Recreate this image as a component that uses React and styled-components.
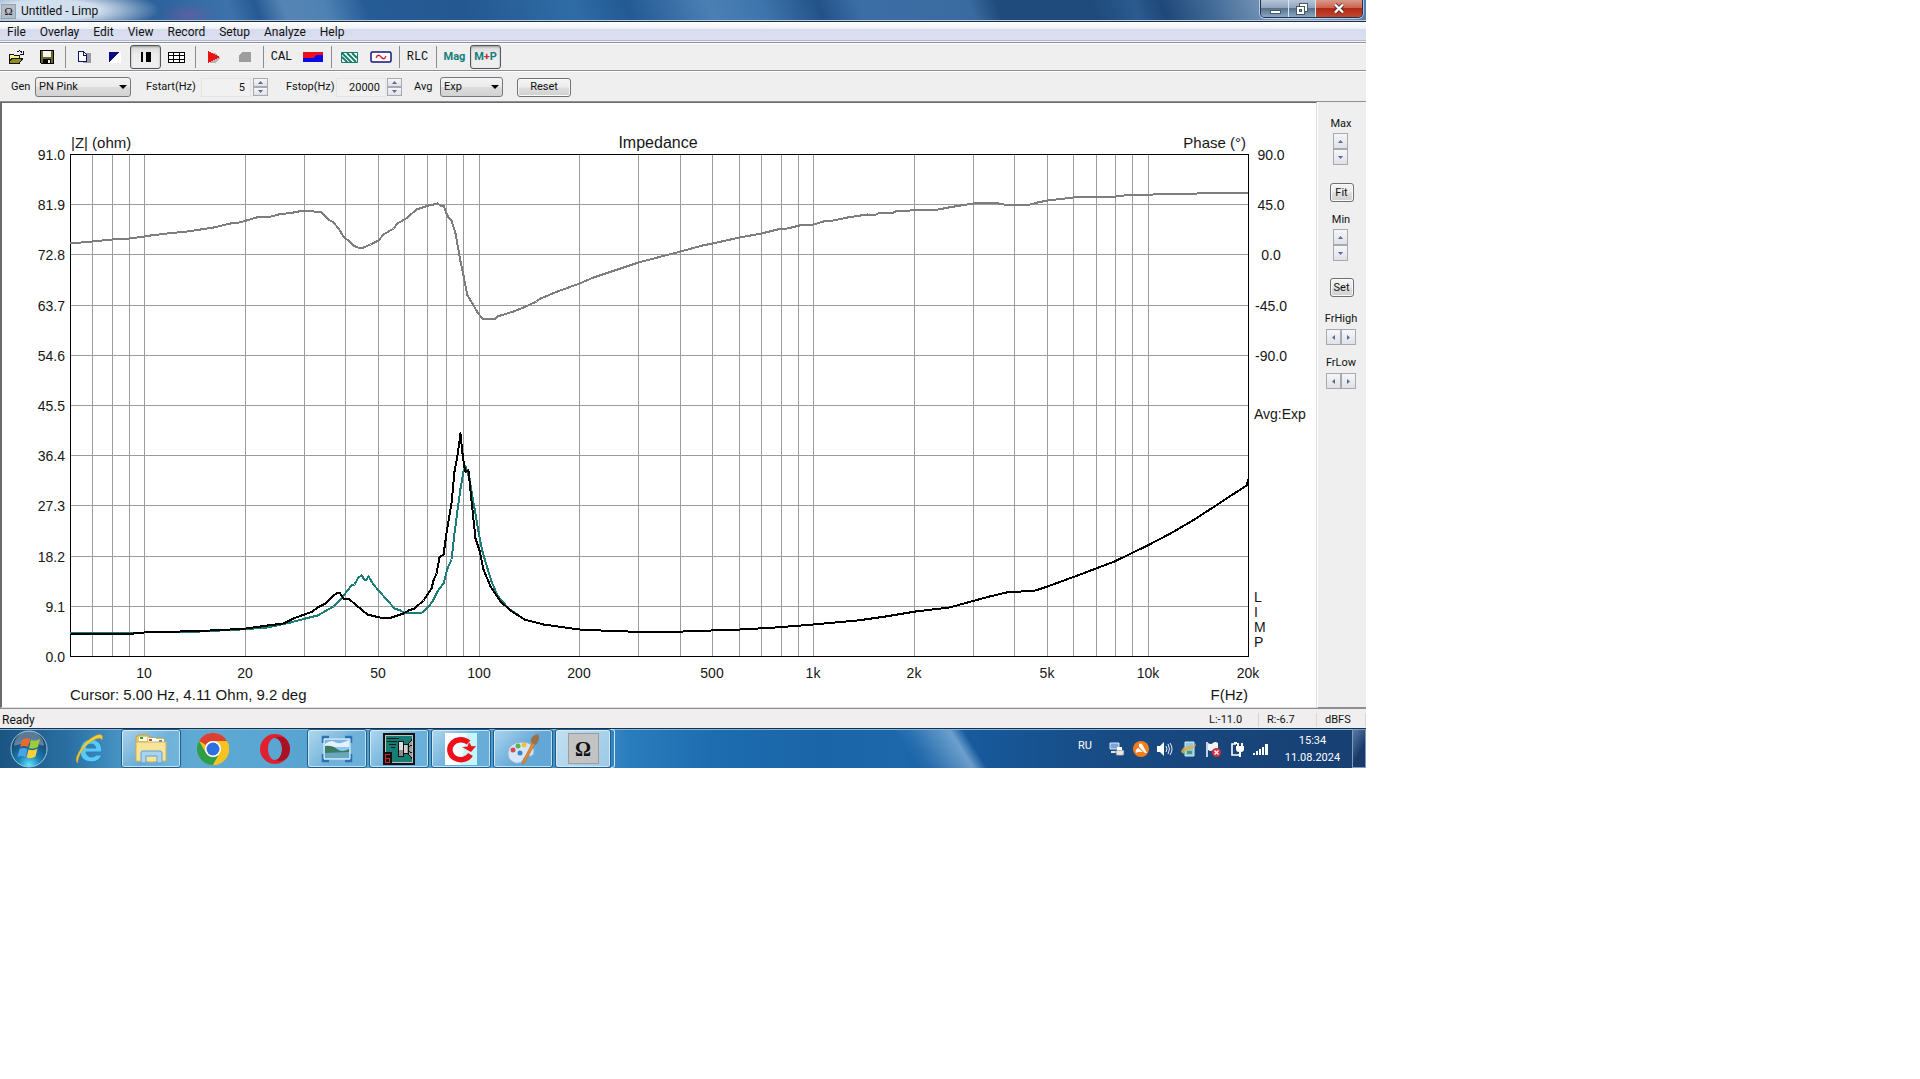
import React from "react";
import styled, { createGlobalStyle, css } from "styled-components";

const GlobalStyle = createGlobalStyle`
  *, *::before, *::after { box-sizing: border-box; }
  body { margin: 0; background: #fff; }
  button, input, select { font: inherit; color: inherit; margin: 0; padding: 0; }
`;

const UI = `Roboto, "Open Sans", sans-serif`;

const Page = styled.div`
  display: grid;
  grid-template-columns: minmax(0, 1366fr) minmax(0, 554fr);
  font-family: ${UI};
  font-size: 11px;
  line-height: 14px;
  color: #111;
`;

const Desktop = styled.main`
  display: flex;
  flex-direction: column;
  overflow: hidden;
`;

/* ---------- title bar ---------- */

const TitleBar = styled.header`
  display: flex;
  align-items: flex-start;
  justify-content: space-between;
  height: 22px;
  border-bottom: 1px solid #1b2c47;
  box-shadow: inset 0 -1px 0 #b9cbe0;
  background:
    radial-gradient(ellipse 110px 22px at 50px 10px, rgba(225, 235, 246, 0.9) 45%, rgba(225, 235, 246, 0) 100%),
    radial-gradient(ellipse 28px 12px at 188px 15px, rgba(130, 90, 160, 0.5), rgba(130, 90, 160, 0) 100%),
    linear-gradient(70deg, #5d83b0 0, #3a6699 7%, #2d629c 12%, #3d72ab 17%, #275a93 19%,
      #5585b5 21%, #4f82b4 24%, #265c96 27%, #245890 34%, #2f6ca6 42%, #235a93 46%, #4a80b4 52%,
      #3d74ab 56%, #235288 60%, #3c6ea6 63%, #3a6ba0 71%, #1f4a7c 73%, #1f4a7c 80%, #2b5b90 83%,
      #1e4878 85%, #486f9b 89%, #8aa5c2 94%, #4f7ba8 100%);
`;

const Caption = styled.div`
  display: flex;
  align-items: center;
  gap: 5px;
  padding: 4px 0 0 1px;
`;

const AppIcon = styled.span`
  width: 15px;
  height: 15px;
  background: #b4bcc6;
  border: 1px solid #98a2ae;
  font: 11px/13px "Liberation Serif", serif;
  text-align: center;
`;

const CaptionText = styled.h1`
  margin: 0;
  font-size: 12px;
  line-height: 15px;
  font-weight: 400;
`;

const WindowButtons = styled.div`
  display: flex;
  height: 18px;
  margin-right: 3px;
  border: 1px solid #1f3350;
  border-top: 0;
  border-radius: 0 0 5px 5px;
  box-shadow: 0 0 0 1px rgba(220, 232, 245, 0.7);
  overflow: hidden;
`;

const WindowButton = styled.button`
  display: grid;
  place-items: center;
  width: ${(p) => (p.$close ? 47 : 27)}px;
  border: 0;
  border-left: ${(p) => (p.$first ? "0" : "1px solid #dce6f0")};
  background: ${(p) =>
    p.$close
      ? "linear-gradient(#d99a8c 0, #cf6450 45%, #b02a15 50%, #c4452c 100%)"
      : "linear-gradient(#b6c5d6 0, #8fa5be 45%, #56728f 50%, #8ba6c1 100%)"};
`;

/* ---------- menu and tool bars ---------- */

const MenuBar = styled.nav`
  display: flex;
  align-items: center;
  height: 21px;
  padding: 0 0 0 7px;
  gap: 14px;
  font-size: 12px;
  border-bottom: 1px solid #8e8f93;
  box-shadow: inset 0 -1px 0 #f4f4f6, inset 0 -2px 0 #b4b8ca;
  background: linear-gradient(#ffffff 0, #edf0f7 7px, #d6dcec 7px, #dde0f3 100%);
`;

const MenuItem = styled.button`
  border: 0;
  background: none;
  line-height: 17px;
`;

const ToolBar = styled.div`
  display: flex;
  align-items: center;
  height: 28px;
  background: #efefef;
  border-top: 1px solid #fff;
  border-bottom: 1px solid #8f8f93;
`;

const ToolButton = styled.button`
  display: grid;
  place-items: center;
  width: 31px;
  height: 24px;
  border: 1px solid transparent;
  border-radius: 3px;
  background: none;
  ${(p) =>
    p.$pressed &&
    css`
      border-color: #55565a;
      background: linear-gradient(#d9d9d9, #ececec 40%, #f0f0f0);
      box-shadow: inset 0 1px 2px #9a9a9a;
    `}
`;

const ToolText = styled.span`
  font-family: ${(p) => (p.$bold ? UI : `"Liberation Mono", monospace`)};
  font-size: ${(p) => (p.$bold ? 11 : 12)}px;
  font-weight: ${(p) => (p.$bold ? 700 : 400)};
  color: ${(p) => (p.$bold ? "#147e7c" : "#111")};
`;

const Plus = styled.span`
  color: #c0392b;
`;

const Separator = styled.span`
  width: 1px;
  height: 22px;
  margin: 0 2px 0 3px;
  background: #8c8c8c;
`;

const Settings = styled.form`
  display: flex;
  align-items: center;
  gap: 5px;
  height: 31px;
  padding: 1px 11px 0;
  border-top: 1px solid #fff;
  border-bottom: 1px solid #8f8f93;
  background: #efefef;
`;

const Field = styled.div`
  display: flex;
  align-items: center;
  margin-right: ${(p) => p.$after || 0}px;
`;

const FieldLabel = styled.label`
  width: ${(p) => p.$w}px;
  white-space: nowrap;
`;

const SelectBox = styled.div`
  display: grid;
  align-items: center;
  width: ${(p) => p.$w}px;
  > * { grid-area: 1 / 1; }
  > svg { justify-self: end; margin-right: 4px; pointer-events: none; }
`;

const Select = styled.select`
  appearance: none;
  height: 20px;
  padding-left: 3px;
  border: 1px solid #77787b;
  border-radius: 3px;
  background: linear-gradient(#f3f3f3, #ebebeb 48%, #dcdcdc 52%, #d2d2d2);
`;

const NumberInput = styled.input`
  width: 50px;
  height: 19px;
  padding-right: 5px;
  border: 1px solid #e2e4e8;
  background: #f1f1f1;
  text-align: right;
`;

const Spin = styled.div`
  display: flex;
  flex-direction: ${(p) => (p.$row ? "row" : "column")};
  margin-left: ${(p) => p.$gap || 0}px;
`;

const SpinButton = styled.button`
  display: grid;
  place-items: center;
  width: 15px;
  height: ${(p) => (p.$large ? 16 : 9)}px;
  border: 1px solid #a9a9ad;
  background: linear-gradient(#f6f6f8, #dfe1e8);
`;

const PushButton = styled.button`
  width: ${(p) => p.$w}px;
  height: 19px;
  border: 1px solid #707073;
  border-radius: 3px;
  background: linear-gradient(#f4f4f4, #ececec 48%, #dedede 52%, #d0d0d0);
  box-shadow: inset 0 0 0 1px #fafafa;
`;

/* ---------- work area ---------- */

const WorkArea = styled.div`
  display: grid;
  grid-template-columns: minmax(0, 1fr) 49px;
  background: #efefef;
`;

const ChartPane = styled.section`
  background: #fff;
  border: solid #6b6b6b;
  border-width: 1px 1px 1px 2px;
  border-right-color: #dedede;
  border-bottom-color: #dedede;
`;

const Chart = styled.svg`
  display: block;
  width: 100%;
  height: auto;
  font-family: "Liberation Sans", Arial, sans-serif;
  font-size: 15px;
  fill: #161616;
`;

const SidePanel = styled.aside`
  display: flex;
  flex-direction: column;
  align-items: center;
  padding: 15px 2px 0 0;
  border-left: 1px solid #fff;
  border-bottom: 1px solid #8f8f93;
`;

const SideGroup = styled.div`
  display: flex;
  flex-direction: column;
  align-items: center;
  gap: ${(p) => (p.$wide ? 3 : 2)}px;
  margin-bottom: ${(p) => p.$after}px;
`;

const SideButton = styled.div`
  margin-bottom: ${(p) => p.$after}px;
  padding-left: 1px;
  line-height: 0;
`;

const StatusBar = styled.footer`
  display: flex;
  align-items: center;
  height: 20px;
  padding-top: 2px;
  border-top: 1px solid #8f8f93;
  background: #f0eeee;
`;

const StatusText = styled.span`
  flex: 1;
  padding-left: 2px;
  font-size: 12px;
`;

const StatusCell = styled.span`
  width: ${(p) => p.$w}px;
  padding-left: 8px;
  border-right: 1px solid #d8d6d6;
`;

/* ---------- task bar ---------- */

const TaskBar = styled.div`
  display: flex;
  justify-content: space-between;
  height: 40px;
  border-top: 1px solid #14304f;
  box-shadow: inset 0 1px 0 #86b5d8;
  background:
    linear-gradient(58deg, transparent 66%, rgba(160, 205, 240, 0.1) 67%, rgba(190, 225, 250, 0.5) 70%, transparent 71%),
    linear-gradient(90deg, #1b5482 0, #2a6fa2 5%, #4795c6 9%, #5eaad5 14%, #56a3d0 24%, #4c9bce 36%,
      #3b8bc6 44%, #2a7dbd 46%, #1d6db0 52%, #1a65a8 60%, #1c68ab 66%, #17589a 72%, #184a82 82%, #173f72 100%);
`;

const Tasks = styled.div`
  display: flex;
  gap: 2px;
`;

const Task = styled.button`
  display: grid;
  place-items: center;
  width: ${(p) => p.$w || 60}px;
  border: 1px solid transparent;
  background: none;
  ${(p) =>
    p.$open &&
    css`
      border-color: #1f5d8c;
      border-radius: 3px;
      box-shadow: inset 0 0 0 1px rgba(225, 243, 255, 0.75);
      background: linear-gradient(135deg, rgba(225, 243, 255, 0.65), rgba(170, 215, 240, 0.3) 55%, rgba(150, 205, 240, 0.35));
    `}
  ${(p) => p.$active && css`background: linear-gradient(120deg, #c3dff0, #9bc9e6);`}
`;

const StackEdge = styled.span`
  width: 4px;
  margin-left: -2px;
  border: 1px solid #cfe6f5;
  border-left: 0;
  border-radius: 0 3px 3px 0;
`;

const OmegaTile = styled.span`
  width: 31px;
  height: 31px;
  background: #c3c3c3;
  border: 1px solid #9c9c9c;
  font: bold 20px/30px "Liberation Serif", serif;
  text-align: center;
`;

const Tray = styled.div`
  display: flex;
  align-items: center;
  color: #fff;
`;

const Language = styled.span`
  width: 30px;
  padding-bottom: 6px;
`;

const TrayIcons = styled.div`
  display: flex;
  gap: 6px;
  padding-top: 1px;
`;

const Clock = styled.time`
  width: 82px;
  padding: 1px 0 0 3px;
  text-align: center;
  line-height: 17px;
`;

const ShowDesktop = styled.button`
  align-self: stretch;
  width: 14px;
  border: 1px solid #7f9cbf;
  background: linear-gradient(120deg, #5a7ba6, #1a3b69 60%);
`;

/* ---------- icons ---------- */

const Icon = ({ w = 16, h = 16, children, smooth, box }) => (
  <svg width={w} height={h} viewBox={box || `0 0 ${w} ${h}`} fill="none" aria-hidden="true"
    shapeRendering={smooth ? "auto" : "crispEdges"}>
    {children}
  </svg>
);

const Arrow = ({ dir }) => {
  const d = { up: "M0 4h5L2.500 1z", down: "M0 1h5L2.500 4z", left: "M4 0v5L1 2.500z", right: "M1 0v5L4 2.500z" }[dir];
  return <Icon w={5} h={5} smooth><path d={d} fill="#5b6b93" /></Icon>;
};

const DropArrow = () => <Icon w={8} h={4} smooth><path d="M0 0h8L4 4z" fill="#000" /></Icon>;

const OpenIcon = () => (
  <Icon w={16} h={14}>
    <path d="M1 12V4h4l1 1h5v3" fill="#f4f08a" stroke="#111" />
    <path d="M1 12.500 4 8h11l-3.500 5H1z" fill="#8d8d22" stroke="#111" />
    <path d="M9 2c2-2 4-1 5 1M15 1v3h-3" stroke="#111" />
  </Icon>
);
const SaveIcon = () => (
  <Icon w={14} h={14}>
    <path d="M.5.5h13v13h-12l-1-1z" fill="#66662a" stroke="#000" />
    <path d="M3 1h8v6H3z" fill="#f3f3f3" /><path d="M3 9h8v5H3z" fill="#000" /><path d="M8 10h2v3H8z" fill="#eee" />
  </Icon>
);
const CopyIcon = () => (
  <Icon w={14} h={12}>
    <path d="M6 2h8v10H6z" fill="#9b9b9b" />
    <path d="M1.500.5h5l3 3v7h-8z" fill="#fff" stroke="#10106e" /><path d="M6.500 1v3h3" stroke="#10106e" />
  </Icon>
);
const FlagIcon = () => (
  <Icon w={12} h={11}><path d="M0 0h12v11H0z" fill="#fff" /><path d="M0 0h10L0 10z" fill="#0b0b80" /></Icon>
);
const CursorsIcon = () => (
  <Icon w={11} h={10}><path d="M1 0h2v10H1zM6 0h5v10H6z" fill="#000" /></Icon>
);
const TableIcon = () => (
  <Icon w={17} h={11}>
    <path d="M0 0h17v11H0z" fill="#fff" />
    <path d="M.5.5h16v10H.5zM0 3.500h17M0 7.500h17M5.500 0v11M11.500 0v11" stroke="#000" />
  </Icon>
);
const PlayIcon = () => (
  <Icon w={14} h={12}><path d="M3 2h6l4 5-5 5H3z" fill="#b5b5b5" /><path d="M1 0l12 6-12 6z" fill="#ee1111" /></Icon>
);
const StopIcon = () => <Icon w={12} h={12}><path d="M3 1h9v10H0V4z" fill="#9d9d9d" /></Icon>;
const SpectrumIcon = () => (
  <Icon w={20} h={10}><path d="M0 0h20v10H0z" fill="#0a0ae8" /><path d="M0 0h20v3h-6l-4 3H0z" fill="#e8101c" /></Icon>
);
const HatchIcon = () => (
  <Icon w={17} h={11} smooth>
    <path d="M.5.5h16v10H.5z" fill="#f2faf6" stroke="#157a68" />
    <path d="M1 5l6 6M1 1l10 10M6 1l9 9M11 1l5 5" stroke="#157a68" strokeWidth="1.800" />
  </Icon>
);
const SineIcon = () => (
  <Icon w={22} h={12} smooth>
    <rect x="1" y="1" width="20" height="10" rx="1.500" fill="#fff" stroke="#15157c" strokeWidth="1.500" />
    <path d="M6 7c1.500-4 3.500-3 5-1s3.500 3 5-1" stroke="#d0202c" strokeWidth="1.300" />
  </Icon>
);

const OrbIcon = () => (
  <Icon w={38} h={38} smooth>
    <defs>
      <radialGradient id="orb" cx="50%" cy="95%" r="80%">
        <stop offset="0" stopColor="#5fe6ff" /><stop offset=".4" stopColor="#1b7fb4" /><stop offset="1" stopColor="#153e66" />
      </radialGradient>
    </defs>
    <circle cx="19" cy="19" r="18" fill="url(#orb)" stroke="#9cc7dd" />
    <path d="M4 16a15 15 0 0 1 30 0q-15-6-30 0z" fill="#fff" opacity=".3" />
    <path d="M12 10q4-3 8-1l-2 8q-4-2-8 0z" fill="#ee6a2a" />
    <path d="M21 10q4 2 9-1l-2 8q-5 3-9 1z" fill="#9ccb3c" />
    <path d="M9.500 19q4-2 8 0l-2 8q-4-2-8 0z" fill="#4aa3e6" />
    <path d="M18.500 19.500q5 2 9-1l-2 8q-4 3-9 1z" fill="#fcd03a" />
  </Icon>
);
const IeIcon = () => (
  <Icon w={32} h={32} smooth>
    <path fillRule="evenodd" d="M29 19H13q1 5 6 5 3 0 4-2h6q-3 7-11 7Q7 28 7 18 8 7 18 6q11 1 11 13zm-6-4q-1-4-5-4t-5 4z" fill="#5cc8f4" stroke="#2384c2" />
    <path d="M5 30Q1 28 6 19 12 7 24 2q7-2 5 5-1-3-6-1Q13 10 7 21q-3 7-2 9z" fill="#f4cf3c" stroke="#cf9f1a" strokeWidth=".6" />
  </Icon>
);
const FolderIcon = () => (
  <Icon w={34} h={32} smooth>
    <path d="M2 4l3-2h9l2 3h13l2 3v20H2z" fill="#e9cc6a" stroke="#c19f44" />
    <path d="M5 4h8v4H5zM14 5h8v4h-8zM22 6h8v4h-8z" fill="#fff" />
    <path d="M6 4h3v2H6z" fill="#3b9b4a" /><path d="M15 6h3v2h-3z" fill="#d8452c" /><path d="M25 7h3v2h-3z" fill="#3f83d0" />
    <path d="M2 9h30v19q-15 2-30 0z" fill="#f7e49b" stroke="#cfb25a" />
    <path d="M7 30V20q0-2 2-2h17q2 0 2 2v10h-5v-7H12v7z" fill="#a9d4f0" stroke="#5f9fcf" />
  </Icon>
);
const ChromeIcon = () => (
  <Icon w={32} h={32} smooth>
    <circle cx="16" cy="16" r="16" fill="#f8c320" />
    <path d="M2.100 8A16 16 0 0 1 29.900 8H16a8 8 0 0 0-7 4z" fill="#dd4032" />
    <path d="M2.100 8A16 16 0 0 0 16 32l7-12a8 8 0 0 1-14 0z" fill="#2e9e4c" />
    <path d="M16 8h13.900A16 16 0 0 1 16 32l7-12a8 8 0 0 0-7-12z" fill="#f8c320" />
    <circle cx="16" cy="16" r="8" fill="#fff" /><circle cx="16" cy="16" r="6.500" fill="#2d6ee0" />
  </Icon>
);
const OperaIcon = () => (
  <Icon w={30} h={32} smooth>
    <path fillRule="evenodd" d="M15 1a15 15 0 0 1 0 30 15 15 0 0 1 0-30zm0 4c-4 0-7 5-7 11s3 11 7 11 7-5 7-11-3-11-7-11z" fill="#e0202f" />
    <path d="M15 5c6-3 10 0 12 2q6 9 0 18-6 5-12 2c4 0 7-5 7-11s-3-11-7-11z" fill="#a81224" />
  </Icon>
);
const PictureIcon = () => (
  <Icon w={32} h={28} smooth>
    <path d="M2 8V2h6M24 2h6v6M2 19v7h6M24 26h6v-7" stroke="#2c71b4" strokeWidth="2.500" />
    <path d="M3 4h26v20H3z" fill="#8cc8ef" stroke="#eaf5fc" />
    <path d="M4 5h24v7H4z" fill="#7db4e4" /><path d="M4 9q6-5 10-2t14-2v7H4z" fill="#e3f1fa" />
    <path d="M4 11q7-1 12 3t12 0v6H4z" fill="#3d7a62" /><path d="M4 18l24-1v6H4z" fill="#6aa7bd" />
  </Icon>
);
const SpeakerIcon = () => (
  <Icon w={32} h={32}>
    <path d="M0 0h32v32H0z" fill="#111" /><path d="M2 2h28v28H2z" fill="#b8c4c0" /><path d="M3 3h26v26H3z" fill="#167c74" />
    <path d="M4 5.500h12M4 8.500h10M6 11.500h7M8 14.500h4" stroke="#0a1f1d" />
    <path d="M15 8h6v16h-6z" fill="#111" /><path d="M16 9h4v14h-4z" fill="#d8dcda" /><path d="M16 17h4v6h-4z" fill="#8a908d" />
    <path d="M21 12h4v8h-4z" fill="#c9cfcc" /><path d="M24 11l5-5v20l-5-5z" fill="#9aa39f" />
    <path d="M21 11.500h4l4-5M21 20.500h4l4 5M25 14l4-2M25 18l4 2M25.500 12v8" stroke="#111" />
    <path d="M0 19h9v13H0z" fill="#111" /><path d="M7 21.500H2.500v8h4v-4h-4" stroke="#e0252c" />
  </Icon>
);
const ReloadIcon = () => (
  <Icon w={32} h={32} smooth>
    <path d="M0 0h32v32H0z" fill="#fff" /><path d="M16 0h16v32H16z" fill="#c4f6fb" /><path d="M14 0h8l-6 32h-4z" fill="#eefcff" />
    <path d="M25.500 21.500a11 10 0 1 1-2-12" stroke="#ee1018" strokeWidth="5.500" /><path d="M17 14l14-1-5 6z" fill="#ee1018" /><path d="M24 9l3 5-5 1z" fill="#ee1018" />
  </Icon>
);
const PaintIcon = () => (
  <Icon w={34} h={32} smooth>
    <path d="M2 19Q3 10 15 9q13 0 13 9 0 6-6 5-4 0-5 4-2 4-8 3Q1 27 2 19z" fill="#d6e6f6" stroke="#8fb0d0" />
    <circle cx="7" cy="17" r="2.500" fill="#d6475a" /><circle cx="12" cy="13" r="2.500" fill="#59b454" />
    <circle cx="18" cy="12" r="2.500" fill="#f0c23c" /><circle cx="14" cy="20" r="2.500" fill="#3c82cc" />
    <path d="M26 10l3 1-11 20-2-1z" fill="#e08c30" stroke="#a8601a" strokeWidth=".5" />
    <path d="M25 9Q24 3 32 1q3 5-2 11z" fill="#9c7049" />
  </Icon>
);

const TrayIcon = ({ children }) => <Icon w={18} h={16} smooth>{children}</Icon>;
const trayIcons = [
  <><path d="M2 2h9v6H2z" fill="#7aa6dc" stroke="#dbe8f5" /><path d="M3 10h7v2H3z" fill="#dfe5ea" /><path d="M8 9h8v5q-4 1-8 0z" fill="#e8e8e4" stroke="#54606c" strokeWidth=".7" /><path d="M9 6h5v3H9z" fill="#fff" /></>,
  <><circle cx="9" cy="8" r="8" fill="#f27d1a" /><path d="M7 3q2-1 3 0l5 9h-2L7 6z" fill="#fff" /><path d="M6 7l5 4q-5-1-7 1-1-3 2-5z" fill="#fff" /></>,
  <><path d="M1 5h3l4-4v14l-4-4H1z" fill="#fff" /><path d="M10 5q2 3 0 6M12 3q3 5 0 10M14 2q4 6 0 12" stroke="#e9f1fa" /></>,
  <><path d="M5 1h9v14H5z" fill="#8cc8e8" stroke="#d5edf8" /><path d="M1 11Q2 5 9 5t7-3q1 5-7 7-4 0-5 4z" fill="#d9b24a" opacity=".85" /><path d="M7 10h5v3H7z" fill="#4b9e63" /></>,
  <><path d="M3 1v15" stroke="#fff" strokeWidth="1.500" /><path d="M4 2q3 2 5 0t5 0v7q-3-2-5 0t-5 0z" fill="#f4f4f4" /><circle cx="12.500" cy="11.500" r="4.500" fill="#d5303a" /><path d="M10.500 9.500l4 4m0-4l-4 4" stroke="#fff" strokeWidth="1.300" /></>,
  <><path d="M8 3H4v11h7v-1" stroke="#fff" strokeWidth="1.600" /><path d="M6 1h3v2H6zM8 5h8v3q0 3-3 3v5h-2v-5q-3 0-3-3zM9 2h2v3H9zM13 2h2v3h-2z" fill="#fff" /></>,
  <><path d="M1 12h2v2H1zM4 10h2v4H4zM7 8h2v6H7zM10 6h2v8h-2zM13 3h3v11h-3z" fill="#fff" /></>,
];

/* ---------- chart ---------- */

const LEFT = 70, RIGHT = 1248, TOP = 154, BOTTOM = 656;
const xOf = (hz) => Math.round(144 + 334.5 * (Math.log10(hz) - 1));
const yOf = (ohm) => Math.round(BOTTOM - (ohm / 91) * (BOTTOM - TOP));

const gridHz = [1, 10, 100, 1000, 10000]
  .flatMap((d) => [1, 2, 3, 4, 5, 6, 7, 8, 9].map((n) => n * d))
  .filter((hz) => hz > 6 && hz < 20000);
const ohmTicks = ["91.0", "81.9", "72.8", "63.7", "54.6", "45.5", "36.4", "27.3", "18.2", "9.1", "0.0"];
const phaseTicks = ["90.0", "45.0", "0.0", "-45.0", "-90.0"];
const hzTicks = [[10, "10"], [20, "20"], [50, "50"], [100, "100"], [200, "200"], [500, "500"], [1000, "1k"],
  [2000, "2k"], [5000, "5k"], [10000, "10k"], [20000, "20k"]];

const phaseLine = "70,243 92,241 112,239 129,238 144,236 150,235 167,233 187,231 200,229 213,227 230,223 239,222 246,220 256,217 271,216 278,214 293,212 303,210 310,210 313,211 320,211 328,219 333,222 338,228 343,236 350,242 353,245 357,247 363,247 370,244 378,240 383,234 393,228 397,223 407,217 416,209 422,207 428,205 433,204 437,203 440,205 443,205 446,213 448,217 451,220 455,233 460,261 463,275 467,295 472,303 477,312 482,318 495,318 497,316 513,311 523,307 536,301 540,298 557,291 579,283 593,277 617,269 638,262 680,251 702,245 712,243 739,237 761,233 777,229 787,228 799,225 813,224 823,221 833,220 847,217 860,215 867,214 873,215 880,212 888,212 891,213 895,211 910,210 938,209 948,207 960,205 973,203 978,202 993,202 1003,204 1026,205 1037,202 1047,200 1073,197 1116,196 1124,195 1153,194 1197,193 1248,192";
const tail = "524,619 543,624 579,629 600,630 655,632 711,630 740,629 775,627 813,624 857,620 885,616 915,611 949,607 967,602 989,596 1006,592 1035,590 1047,586 1077,575 1114,561 1147,545 1170,533 1194,519 1220,502 1246,485 1248,479";
const liveLine = "70,633 133,633 144,632 180,631 210,630 230,629 246,628 267,625 283,623 293,618 312,611 317,607 325,603 332,596 337,592 339,592 343,598 349,599 355,604 362,610 367,614 379,617 391,617 403,613 408,610 414,608 423,600 431,588 433,580 436,573 439,557 443,554 446,533 451,503 454,471 457,455 460,433 462,453 464,467 465,471 468,470 471,500 475,538 479,550 483,569 490,586 500,601 510,610 " + tail;
const overlayLine = "70,633 124,632 180,632 240,629 267,627 290,622 305,618 317,615 333,606 340,599 351,585 354,584 358,577 361,575 364,579 366,579 368,576 373,584 378,590 387,600 394,608 400,610 405,613 422,612 428,606 432,601 437,591 443,583 447,568 451,559 454,533 457,510 460,488 463,471 465,466 469,478 474,508 478,531 482,551 487,568 491,581 497,595 508,608 " + tail;

const ImpedanceChart = () => (
  <Chart viewBox="2 103 1314 604" role="img" aria-label="Impedance and phase against frequency">
    <g transform="translate(0.5 0.5)" fill="none" shapeRendering="crispEdges">
      <g stroke="#9b9b9b">
        {gridHz.map((hz) => <path key={hz} d={`M${xOf(hz)} ${TOP}V${BOTTOM}`} />)}
        {ohmTicks.map((t) => <path key={t} d={`M${LEFT} ${yOf(+t)}H${RIGHT}`} />)}
      </g>
      <rect x={LEFT} y={TOP} width={RIGHT - LEFT} height={BOTTOM - TOP} stroke="#000" />
      <g strokeWidth="2" strokeLinejoin="round">
        <polyline points={phaseLine} stroke="#7d7d7d" />
        <polyline points={overlayLine} stroke="#1c7c78" />
        <polyline points={liveLine} stroke="#000" />
      </g>
    </g>
    <text x="71" y="148">|Z| (ohm)</text>
    <text x="658" y="148" fontSize="16" textAnchor="middle">Impedance</text>
    <text x="1246" y="148" textAnchor="end">Phase (°)</text>
    <g fontSize="14" textAnchor="end">
      {ohmTicks.map((t) => <text key={t} x="65" y={yOf(+t) + 6}>{t}</text>)}
    </g>
    <g fontSize="14" textAnchor="middle">
      {phaseTicks.map((t, i) => <text key={t} x="1271" y={yOf(91 - i * 9.1) + 6}>{t}</text>)}
      {hzTicks.map(([hz, t]) => <text key={t} x={xOf(hz)} y="678">{t}</text>)}
    </g>
    <g fontSize="14">
      <text x="1254" y="419">Avg:Exp</text>
      {["L", "I", "M", "P"].map((c, i) => <text key={c} x="1254" y={602 + i * 15}>{c}</text>)}
    </g>
    <text x="70" y="700">Cursor: 5.00 Hz, 4.11 Ohm, 9.2 deg</text>
    <text x="1248" y="700" textAnchor="end">F(Hz)</text>
  </Chart>
);

/* ---------- composition ---------- */

const Stepper = ({ name, row, large, gap }) => (
  <Spin $row={row} $gap={gap} role="group" aria-label={name}>
    <SpinButton type="button" $large={large} aria-label={row ? `${name} left` : `${name} up`}><Arrow dir={row ? "left" : "up"} /></SpinButton>
    <SpinButton type="button" $large={large} aria-label={row ? `${name} right` : `${name} down`}><Arrow dir={row ? "right" : "down"} /></SpinButton>
  </Spin>
);

const toolGroups = [
  [["Open", <OpenIcon />], ["Save", <SaveIcon />]],
  [["Copy", <CopyIcon />], ["Colors", <FlagIcon />], ["Cursor", <CursorsIcon />, true], ["Grid", <TableIcon />]],
  [["Start", <PlayIcon />], ["Stop", <StopIcon />]],
  [["Calibrate", <ToolText>CAL</ToolText>], ["Spectrum", <SpectrumIcon />]],
  [["Overlay", <HatchIcon />], ["Generator", <SineIcon />]],
  [["RLC", <ToolText>RLC</ToolText>]],
  [["Magnitude", <ToolText $bold>Mag</ToolText>], ["Magnitude and phase", <ToolText $bold>M<Plus>+</Plus>P</ToolText>, true]],
];

const tasks = [
  ["Internet Explorer", <IeIcon />, false], ["Explorer", <FolderIcon />, true], ["Chrome", <ChromeIcon />, false],
  ["Opera", <OperaIcon />, false], ["Picture viewer", <PictureIcon />, true], ["Speaker", <SpeakerIcon />, true],
  ["Reload", <ReloadIcon />, true], ["Paint", <PaintIcon />, true],
];

export default function App() {
  return (
    <Page>
      <GlobalStyle />
      <Desktop>
        <TitleBar>
          <Caption><AppIcon>Ω</AppIcon><CaptionText>Untitled - Limp</CaptionText></Caption>
          <WindowButtons>
            <WindowButton $first aria-label="Minimize"><Icon w={12} h={12}><path d="M1 7.500h10v3H1z" fill="#fff" stroke="#4a5768" /></Icon></WindowButton>
            <WindowButton aria-label="Restore">
              <Icon w={12} h={12}><path d="M3.500.5h8v8h-8z" fill="#fff" stroke="#4a5768" /><path d="M.5 3.500h8v8h-8z" fill="#fff" stroke="#4a5768" /><path d="M3.500 6.500h2v2h-2z" fill="#8a9bb0" stroke="#4a5768" /></Icon>
            </WindowButton>
            <WindowButton $close aria-label="Close">
              <Icon w={12} h={11} smooth><path d="M2 1.500l8 8m0-8l-8 8" stroke="#5a3030" strokeWidth="4" /><path d="M2 1.500l8 8m0-8l-8 8" stroke="#fff" strokeWidth="2.400" /></Icon>
            </WindowButton>
          </WindowButtons>
        </TitleBar>

        <MenuBar>
          {["File", "Overlay", "Edit", "View", "Record", "Setup", "Analyze", "Help"].map((m) => <MenuItem key={m}>{m}</MenuItem>)}
        </MenuBar>

        <ToolBar role="toolbar">
          {toolGroups.map((group, i) => (
            <React.Fragment key={i}>
              {i > 0 && <Separator />}
              {group.map(([name, icon, pressed]) => (
                <ToolButton key={name} type="button" aria-label={name} $pressed={pressed}>{icon}</ToolButton>
              ))}
            </React.Fragment>
          ))}
        </ToolBar>

        <Settings>
          <Field $after={10}>
            <FieldLabel htmlFor="gen" $w={24}>Gen</FieldLabel>
            <SelectBox $w={96}><Select id="gen"><option>PN Pink</option></Select><DropArrow /></SelectBox>
          </Field>
          <Field $after={13}>
            <FieldLabel htmlFor="fstart" $w={55}>Fstart(Hz)</FieldLabel>
            <NumberInput id="fstart" defaultValue="5" />
            <Stepper name="Fstart" gap={2} />
          </Field>
          <Field $after={7}>
            <FieldLabel htmlFor="fstop" $w={50}>Fstop(Hz)</FieldLabel>
            <NumberInput id="fstop" defaultValue="20000" />
            <Stepper name="Fstop" gap={1} />
          </Field>
          <Field $after={9}>
            <FieldLabel htmlFor="avg" $w={26}>Avg</FieldLabel>
            <SelectBox $w={63}><Select id="avg"><option>Exp</option></Select><DropArrow /></SelectBox>
          </Field>
          <PushButton type="button" $w={54}>Reset</PushButton>
        </Settings>

        <WorkArea>
          <ChartPane><ImpedanceChart /></ChartPane>
          <SidePanel>
            <SideGroup $after={18}><span>Max</span><Stepper name="Max" large /></SideGroup>
            <SideButton $after={11}><PushButton $w={24}>Fit</PushButton></SideButton>
            <SideGroup $after={17}><span>Min</span><Stepper name="Min" large /></SideGroup>
            <SideButton $after={15}><PushButton $w={24}>Set</PushButton></SideButton>
            <SideGroup $wide $after={11}><span>FrHigh</span><Stepper name="FrHigh" row large /></SideGroup>
            <SideGroup $wide $after={0}><span>FrLow</span><Stepper name="FrLow" row large /></SideGroup>
          </SidePanel>
        </WorkArea>

        <StatusBar>
          <StatusText>Ready</StatusText>
          <StatusCell $w={58}>L:-11.0</StatusCell>
          <StatusCell $w={58}>R:-6.7</StatusCell>
          <StatusCell $w={49}>dBFS</StatusCell>
        </StatusBar>

        <TaskBar>
          <Tasks>
            <Task $w={57} aria-label="Start"><OrbIcon /></Task>
            {tasks.map(([name, icon, open]) => <Task key={name} aria-label={name} $open={open}>{icon}</Task>)}
            <Task $w={56} $open $active aria-label="Limp"><OmegaTile>Ω</OmegaTile></Task>
            <StackEdge />
          </Tasks>
          <Tray>
            <Language>RU</Language>
            <TrayIcons>{trayIcons.map((icon, i) => <TrayIcon key={i}>{icon}</TrayIcon>)}</TrayIcons>
            <Clock>15:34<br />11.08.2024</Clock>
            <ShowDesktop aria-label="Show desktop" />
          </Tray>
        </TaskBar>
      </Desktop>
    </Page>
  );
}
